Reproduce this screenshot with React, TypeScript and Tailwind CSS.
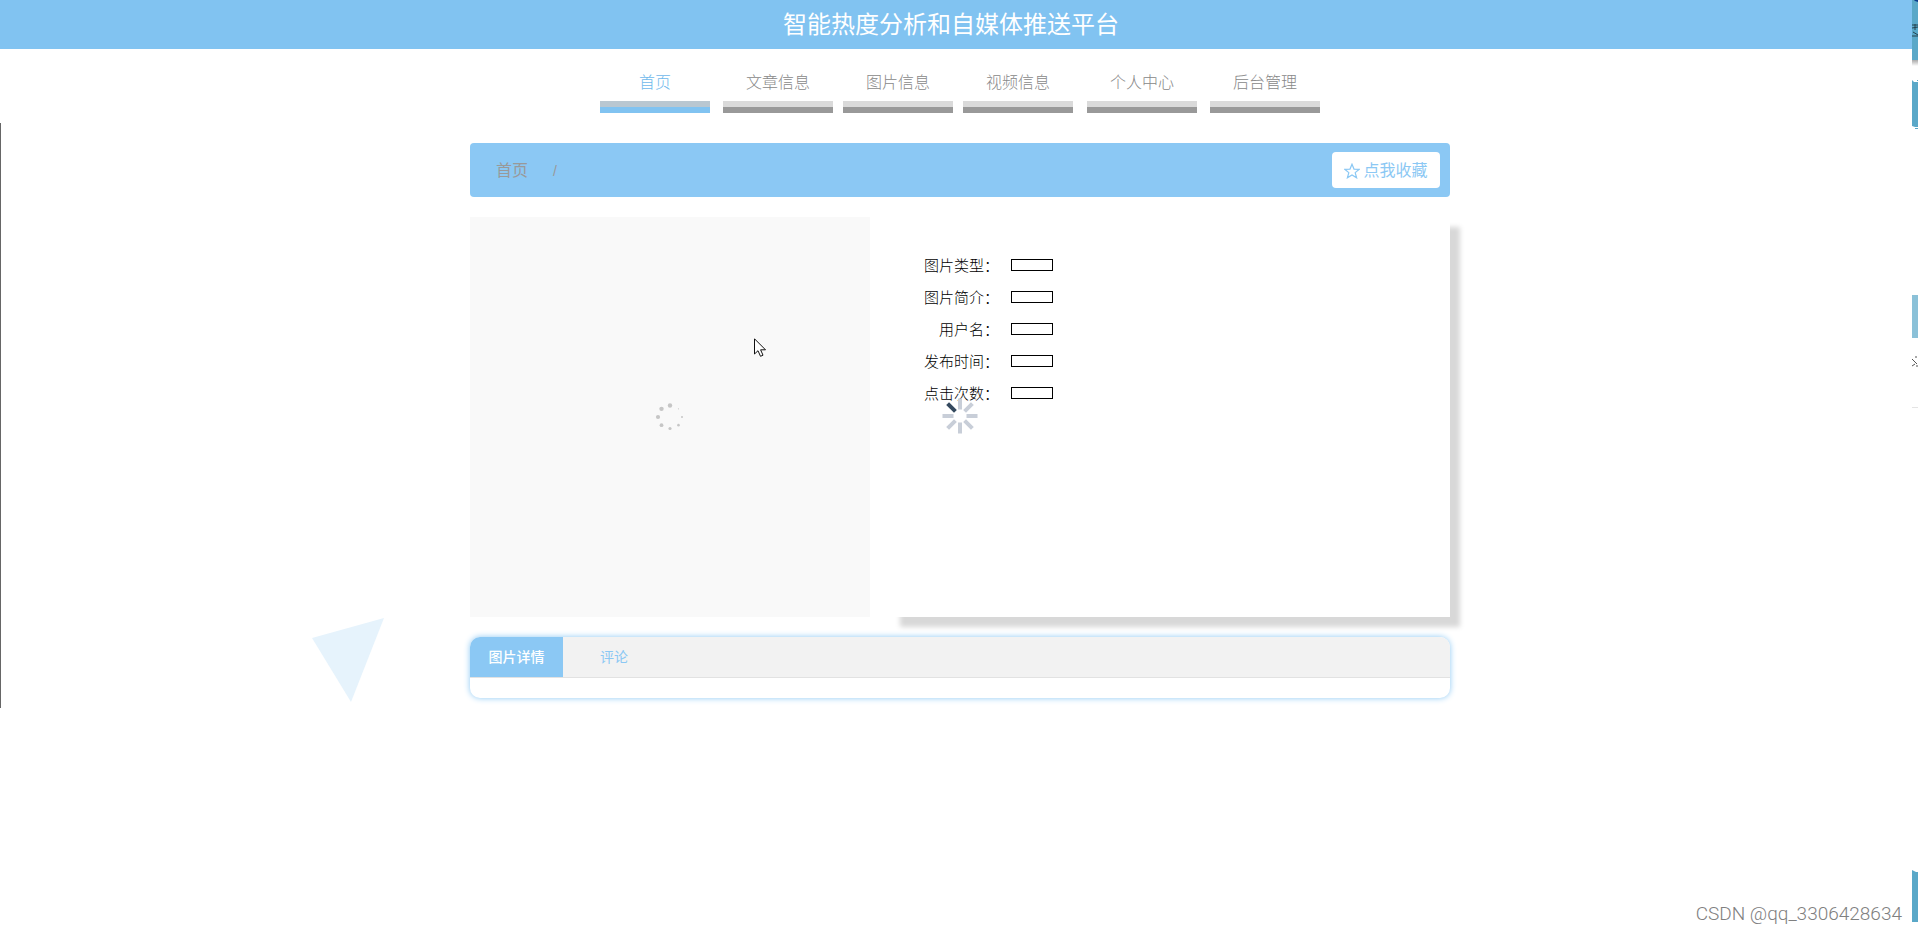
import React from "react";
import { clsx } from "clsx";

const navItems = [
  { label: "首页", gap: "", active: true },
  { label: "文章信息", gap: "ml-[13px]" },
  { label: "图片信息", gap: "ml-2.5" },
  { label: "视频信息", gap: "ml-2.5" },
  { label: "个人中心", gap: "ml-3.5" },
  { label: "后台管理", gap: "ml-[13px]" },
];

const fields = [
  { id: "type", label: "图片类型：" },
  { id: "intro", label: "图片简介：" },
  { id: "user", label: "用户名：" },
  { id: "time", label: "发布时间：" },
  { id: "clicks", label: "点击次数：" },
];

// clockwise from the top, radius shrinks along the trail
const dots = [2.2, 0.6, 1, 1.3, 1.6, 1.9, 2.1, 2.2];

function Header() {
  return (
    <header className="flex h-[49px] items-center justify-center bg-[#81c3f1] pr-4">
      <h1 className="text-2xl leading-none text-white">
        智能热度分析和自媒体推送平台
      </h1>
    </header>
  );
}

function Nav() {
  return (
    <nav className="mt-[22px] flex justify-center">
      {navItems.map((n) => (
        <a
          key={n.label}
          href="#"
          className={clsx(
            "flex w-[110px] flex-col text-center text-base leading-6 font-light",
            n.gap,
            n.active ? "text-[#6fb9ec]" : "text-[#888]"
          )}
        >
          {n.label}
          <span
            className={clsx(
              "mt-1.5 h-3 border-b-6",
              n.active
                ? "border-[#81c3f1] bg-[#b9c7d1]"
                : "border-[#999] bg-[#dadada]"
            )}
          />
        </a>
      ))}
    </nav>
  );
}

function Breadcrumb() {
  return (
    <div className="flex h-[54px] items-center rounded bg-[#8bc8f4] pr-2.5 pl-[26px] text-[#999]">
      <a href="#" className="pt-0.5 text-base">
        首页
      </a>
      <span className="ml-[25px] pt-0.5 text-sm">/</span>
      <button
        type="button"
        className="ml-auto flex h-9 w-[108px] items-center justify-center gap-[3px] rounded bg-white pt-0.5 text-base text-[#8bc8f4]"
      >
        <svg viewBox="0 0 16 16" className="size-4" fill="none" stroke="currentColor" strokeWidth="1.2">
          <path d="M8 1.2 10 6.1 15.2 6.3 11.2 9.6 12.6 14.8 8 11.9 3.4 14.8 4.8 9.6.8 6.3 6 6.1Z" />
        </svg>
        点我收藏
      </button>
    </div>
  );
}

function DotLoader() {
  return (
    <svg viewBox="-15 -15 30 30" className="size-[30px]" fill="#c6c6c6">
      {dots.map((r, i) => {
        const a = (i * Math.PI) / 4;
        return <circle key={i} cx={Math.sin(a) * 12} cy={-Math.cos(a) * 11.5} r={r} />;
      })}
    </svg>
  );
}

function BarLoader() {
  return (
    <svg viewBox="-18 -18 36 36" className="absolute top-[181px] left-[52px] size-9">
      {[0, 45, 90, 135, 180, 225, 270, 315].map((deg) => (
        <rect
          key={deg}
          x="-2"
          y="-17.5"
          width="4"
          height="11"
          fill={deg === 315 ? "#34495e" : "#c8ced8"}
          transform={`rotate(${deg})`}
        />
      ))}
    </svg>
  );
}

function Info() {
  return (
    <section className="relative ml-5 flex-1 bg-white pt-8 shadow-[10px_10px_5px_#d8d8d8]">
      {fields.map((f) => (
        <div key={f.id} className="flex h-8 items-center">
          <label htmlFor={f.id} className="w-[109px] pt-px text-right text-[15px] leading-8 font-light text-black">
            {f.label}
          </label>
          <input id={f.id} readOnly className="ml-3 h-3 w-[42px] border border-black bg-white" />
        </div>
      ))}
      <BarLoader />
    </section>
  );
}

function Tabs() {
  return (
    <section className="mt-5 h-[61px] overflow-hidden rounded-[10px] bg-white shadow-[0_0_6px_#8bc8f4]">
      <div role="tablist" className="flex h-[41px] border-b border-[#e2e2e2] bg-[#f2f2f2] text-sm">
        <button role="tab" aria-selected="true" type="button" className="h-10 w-[93px] bg-[#8bc8f4] font-medium text-white">
          图片详情
        </button>
        <button role="tab" aria-selected="false" type="button" className="h-10 w-[102px] text-[#8bc8f4]">
          评论
        </button>
      </div>
    </section>
  );
}

// sliver of the neighbouring window along the right edge
function EdgeStrip() {
  return (
    <div className="absolute inset-y-0 right-0 flex w-1.5 flex-col overflow-hidden bg-white">
      <div className="h-[60px] bg-[#5aa8c8]">
        <svg viewBox="0 0 6 60" className="h-[60px] w-1.5" stroke="#24424f" fill="none">
          <path d="M2 0h4v2L3 1z" fill="#0b3b8c" stroke="none" />
          <path d="M0 25h6M0 28l6-1M1 32l5 3M0 36h6M3 24v6" />
        </svg>
      </div>
      <div className="h-1.5 bg-linear-to-b from-[#aaa] to-white" />
      <svg viewBox="0 0 6 50" className="mt-3.5 h-[50px] w-1.5 shrink-0" fill="#5aa8c8">
        <path d="M0 0 2 2H6V47H3L0 46ZM5 0h1v1H5ZM3 48h3v1H3Z" />
      </svg>
      <div className="mt-[165px] h-[43px] bg-[#8bc1d8]" />
      <svg viewBox="0 0 6 12" className="mt-[18px] h-3 w-1.5 shrink-0" stroke="#555" fill="none">
        <path d="M0 3l5 5M0 10l3-2M3 1h2M4 10h2" />
      </svg>
      <div className="mt-[39px] h-px shrink-0 bg-[#e4e4e4]" />
      <svg viewBox="0 0 6 52" className="mt-auto mb-2.5 h-[52px] w-1.5 shrink-0" fill="#5aa8c8">
        <path d="M0 0 4 2H6V52H0Z" />
      </svg>
    </div>
  );
}

export default function App() {
  return (
    <div className="relative min-h-screen overflow-hidden bg-white font-['Liberation_Sans','Noto_Sans_CJK_SC',sans-serif]">
      <Header />
      <div className="pl-0.5">
        <Nav />
        <main className="mx-auto mt-[30px] w-[980px] max-w-full">
          <Breadcrumb />
          <div className="mt-5 flex h-[400px]">
            <div className="flex w-[400px] items-center justify-center bg-[#f9f9f9]">
              <DotLoader />
            </div>
            <Info />
          </div>
          <Tabs />
        </main>
      </div>

      <div className="absolute top-[123px] left-0 h-[585px] w-px bg-[#666]" />
      <svg viewBox="0 0 72 84" className="absolute top-[618px] left-[312px] h-[84px] w-[72px]">
        <path d="M0 20 72 0 39 84Z" fill="#e6f3fc" />
      </svg>
      <svg viewBox="0 0 13 20" className="absolute top-[338px] left-[754px] h-5 w-[13px]">
        <path d="M.5.8V16L4 12.7 6.5 18.3 9 17.2 6.6 11.8H11.5Z" fill="#fff" stroke="#111" />
      </svg>
      <EdgeStrip />
      <p className="absolute right-4 bottom-1.5 font-[Roboto,sans-serif] text-[19px] leading-6 font-light text-[#808080]">
        CSDN @qq_3306428634
      </p>
    </div>
  );
}
